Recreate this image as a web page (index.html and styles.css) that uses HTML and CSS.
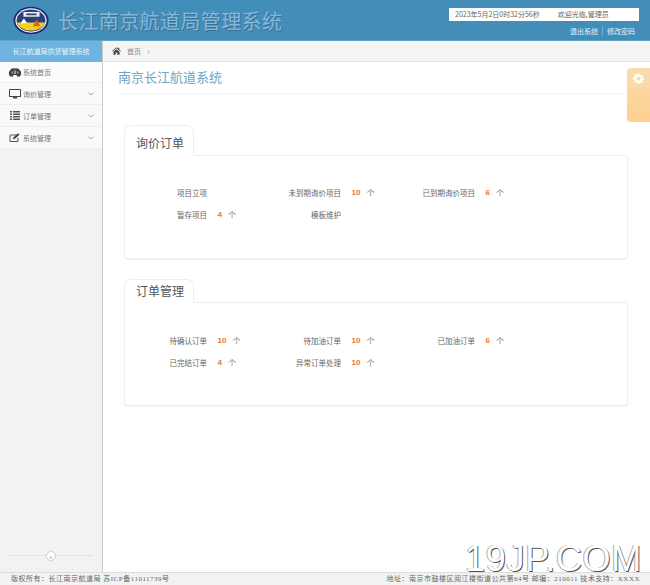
FILE: index.html
```html
<!DOCTYPE html>
<html lang="zh-CN">
<head>
  <meta charset="UTF-8" />
  <title>长江南京航道局管理系统</title>
  <link rel="stylesheet" href="styles.css">
</head>
<body>
  <!-- Header -->
  <header class="topbar">
    <svg class="logo" width="36" height="29" viewBox="0 0 38 30">
      <ellipse cx="19" cy="15" rx="18.5" ry="14.500" fill="#1d2a6b"/>
      <ellipse cx="19" cy="15" rx="16.5" ry="12.800" fill="#f4f4f4"/>
      <ellipse cx="19" cy="15" rx="15.2" ry="11.600" fill="#27407f"/>
      <path d="M4 17h30c-1 4-7 8.600-15 8.600S5 21 4 17z" fill="#f2d21f"/>
      <rect x="11" y="6" width="17" height="5" fill="#f1f1f1"/>
      <rect x="14" y="7.500" width="11" height="2" fill="#3a4a80"/>
      <path d="M8 18l3.500-5 3.500 5z" fill="#fff"/>
      <path d="M21 21l4-7 4 7z" fill="#d8641e"/>
    </svg>
    <div class="site-title">长江南京航道局管理系统</div>
    <div class="top-right">
      <div class="info-box">
        <span>2023年5月2日0时32分56秒</span>
        <span>欢迎光临,管理员</span>
      </div>
      <div class="top-links">
        <a>退出系统</a>
        <a>修改密码</a>
      </div>
    </div>
  </header>

  <div class="main">
    <!-- Sidebar -->
    <aside class="sidebar">
      <div class="side-title">长江航道局供货管理系统</div>
      <ul class="nav">
        <li class="nav-item">
          <svg class="nav-icon" width="11" height="9" viewBox="0 0 11 9">
            <path d="M.500 8.500A5 5 0 0 1 5.500.500a5 5 0 0 1 5 8H7.500L7 7H4l-.5 1.500z" fill="#444"/>
            <path d="M5.500 6V2.500" stroke="#eee" stroke-width="1"/>
            <path d="M2.500 5.500l.6-2M8.500 5.500l-.6-2" stroke="#eee" stroke-width=".8"/>
          </svg>
          <span>系统首页</span>
        </li>
        <li class="nav-item">
          <svg class="nav-icon" width="11" height="10" viewBox="0 0 12 10">
            <path d="M.500.500h11v7H.500z" fill="none" stroke="#444"/>
            <path d="M0 7h12v1H0zM4 8h4v1.500H4z" fill="#444"/>
          </svg>
          <span>询价管理</span>
          <svg class="arrow" width="6" height="4" viewBox="0 0 7 4"><path d="M.500.500l3 2.500 3-2.500" fill="none" stroke="#999"/></svg>
        </li>
        <li class="nav-item">
          <svg class="nav-icon" width="10" height="9" viewBox="0 0 10 9">
            <path d="M0 0h2v1.500H0zM3 0h7v1.500H3zM0 2.500h2V4H0zM3 2.500h7V4H3zM0 5h2v1.500H0zM3 5h7v1.500H3zM0 7.500h2V9H0zM3 7.500h7V9H3z" fill="#555"/>
          </svg>
          <span>订单管理</span>
          <svg class="arrow" width="6" height="4" viewBox="0 0 7 4"><path d="M.500.500l3 2.500 3-2.500" fill="none" stroke="#999"/></svg>
        </li>
        <li class="nav-item">
          <svg class="nav-icon" width="11" height="9" viewBox="0 0 11 9">
            <path d="M7.500 2H1a.5.500 0 0 0-.5.500v6h8V5" fill="none" stroke="#555"/>
            <path d="M3.500 6.200l.5-2L8.500.300l1.500 1.500L5.500 5.700z" fill="#444"/>
          </svg>
          <span>系统管理</span>
          <svg class="arrow" width="6" height="4" viewBox="0 0 7 4"><path d="M.500.500l3 2.500 3-2.500" fill="none" stroke="#999"/></svg>
        </li>
      </ul>
      <div class="collapse">
        <span class="collapse-btn">«</span>
      </div>
    </aside>

    <!-- Contenuto -->
    <main class="content">
      <div class="breadcrumb">
        <svg width="9" height="8" viewBox="0 0 11 9">
          <path d="M5.500 0L0 4.500l.6.700 4.900-4 4.900 4 .6-.7-2-1.600V.600H7.500v1.100zM1.800 5.300V9h2.700V6.200h2V9h2.700V5.300L5.500 2.300z" fill="#444"/>
        </svg>
        <a>首页</a>
        <span class="crumb-sep">›</span>
      </div>

      <div class="page-title">南京长江航道系统</div>

      <section class="panel panel-first">
        <div class="tab">询价订单</div>
        <div class="panel-body">
          <div class="stat"><span class="stat-label">项目立项</span></div>
          <div class="stat"><span class="stat-label">未到期询价项目</span><b>10</b><span class="unit">个</span></div>
          <div class="stat"><span class="stat-label">已到期询价项目</span><b>6</b><span class="unit">个</span></div>
          <div class="stat"><span class="stat-label">暂存项目</span><b>4</b><span class="unit">个</span></div>
          <div class="stat"><span class="stat-label">模板维护</span></div>
        </div>
      </section>

      <section class="panel">
        <div class="tab">订单管理</div>
        <div class="panel-body">
          <div class="stat"><span class="stat-label">待确认订单</span><b>10</b><span class="unit">个</span></div>
          <div class="stat"><span class="stat-label">待加油订单</span><b>10</b><span class="unit">个</span></div>
          <div class="stat"><span class="stat-label">已加油订单</span><b>6</b><span class="unit">个</span></div>
          <div class="stat"><span class="stat-label">已完结订单</span><b>4</b><span class="unit">个</span></div>
          <div class="stat"><span class="stat-label">异常订单处理</span><b>10</b><span class="unit">个</span></div>
        </div>
      </section>
    </main>
  </div>

  <footer class="footer">
    <span>版权所有：长江南京航道局 苏ICP备11011739号</span>
    <span>地址：南京市鼓楼区阅江楼街道公共第64号 邮编：210011 技术支持：XXXX</span>
  </footer>

  <!-- Linguetta impostazioni -->
  <div class="settings-tab">
    <svg width="11" height="11" viewBox="0 0 24 24">
      <path d="M10 1h4l.6 3.200 1.900.8L19.200 3 22 5.800l-2 2.700.8 1.900L24 11v4l-3.200.4-.8 1.900 2 2.700-2.800 2.800-2.700-2-1.900.8L14 24h-4l-.6-3.400-1.900-.8-2.700 2L2 19l2-2.700-.8-1.900L0 14v-4l3.200-.6.800-1.900-2-2.700L4.800 2l2.700 2 1.900-.8zM12 8a4.500 4.500 0 1 0 0 9 4.500 4.500 0 0 0 0-9z" fill="#fff" fill-rule="evenodd"/>
    </svg>
  </div>

  <div class="watermark">19JP.COM</div>
</body>
</html>
```

FILE: styles.css
```css
* {
  box-sizing: border-box;
  margin: 0;
  padding: 0;
}

html,
body {
  height: 585px;
  overflow: hidden;
}

body {
  position: relative;
  display: flex;
  flex-direction: column;
  background-color: #fff;
  color: #555;
  font-family: "Noto Sans CJK SC", "Liberation Sans", sans-serif;
  font-size: 7px;
}

/* Header */
.topbar {
  display: flex;
  align-items: center;
  height: 41px;
  padding: 0 11px 0 13px;
  background-color: #438eb9;
  border-bottom: 1px solid #5fa3cb;
}

.logo {
  flex-shrink: 0;
  margin-right: 9px;
}

.site-title {
  font-size: 20px;
  letter-spacing: .4px;
  color: #86b9d6;
  text-shadow: 1px 1px 0 #3a6f9a;
  white-space: nowrap;
}

.top-right {
  margin-left: auto;
  margin-top: 3px;
  width: 190px;
}

.info-box {
  display: flex;
  gap: 18px;
  align-items: center;
  height: 13px;
  padding-left: 6px;
  background-color: #fff;
  color: #666;
  font-size: 7px;
  white-space: nowrap;
}

.top-links {
  display: flex;
  justify-content: flex-end;
  margin-top: 5px;
  padding-right: 4px;
  color: #e6f1f7;
  font-size: 7px;
  line-height: 10px;
}

.top-links a + a {
  margin-left: 4px;
  padding-left: 4px;
  border-left: 1px solid #6fb0d4;
}

.main {
  display: flex;
  flex: 1;
  min-height: 0;
}

/* Sidebar */
.sidebar {
  display: flex;
  flex-direction: column;
  width: 103px;
  flex-shrink: 0;
  background-color: #f2f2f2;
  border-right: 1px solid #ccc;
}

.side-title {
  height: 21px;
  line-height: 21px;
  text-align: center;
  background-color: #6fb3e0;
  color: #eaf4fa;
  font-size: 7px;
  white-space: nowrap;
}

.nav {
  list-style: none;
}

.nav-item {
  display: flex;
  align-items: center;
  height: 22px;
  padding: 0 7px 0 7px;
  background-color: #f9f9f9;
  border-bottom: 1px solid #eee;
  color: #777;
}

.nav-item:first-child {
  height: 21px;
  background-color: #fbfbfb;
}

.nav-icon {
  width: 16px;
  flex-shrink: 0;
}

.arrow {
  margin-left: auto;
  margin-right: 1px;
}

.collapse {
  position: relative;
  display: flex;
  justify-content: center;
  margin: auto 9px 11px;
  border-top: 1px solid #e2e2e2;
}

.collapse-btn {
  width: 10px;
  height: 10px;
  margin-top: -5px;
  line-height: 8px;
  text-align: center;
  background-color: #fff;
  border: 1px solid #ccc;
  border-radius: 50%;
  color: #999;
  font-size: 7px;
}

/* Contenuto */
.content {
  flex: 1;
  min-width: 0;
  padding-right: 22px;
}

.breadcrumb {
  display: flex;
  align-items: center;
  gap: 6px;
  height: 21px;
  margin-right: -22px;
  padding-left: 9px;
  background-color: #f5f5f5;
  border-bottom: 1px solid #e5e5e5;
  color: #8a8a8a;
}

.crumb-sep {
  color: #aaa;
  font-size: 9px;
}

.page-title {
  height: 32px;
  margin-left: 15px;
  padding-top: 5px;
  border-bottom: 1px solid #f4f4f4;
  color: #6ba6c4;
  font-size: 13px;
  line-height: 20px;
}

.panel {
  margin: 20px 0 0 21px;
}

.panel-first {
  margin-top: 31px;
}

.tab {
  position: relative;
  width: 70px;
  height: 24px;
  margin-bottom: -1px;
  padding-left: 11px;
  background-color: #fff;
  border: 1px solid #eee;
  border-bottom: none;
  border-radius: 7px 7px 0 0;
  color: #555;
  font-size: 12px;
  line-height: 22px;
}

.panel-first .tab {
  height: 31px;
  padding-top: 6px;
}

.panel-body {
  display: grid;
  grid-template-columns: repeat(3, 134px);
  grid-auto-rows: 22px;
  height: 104px;
  padding-top: 26px;
  background-color: #fff;
  border: 1px solid #eee;
  border-radius: 0 4px 4px 4px;
  box-shadow: 0 1px 1px #f2f2f2;
}

.panel-first .panel-body {
  padding-top: 25px;
}

.stat {
  display: flex;
  align-items: center;
  color: #666;
  font-size: 7.500px;
}

.stat-label {
  width: 82px;
  margin-right: 10.500px;
  text-align: right;
  white-space: nowrap;
}

.stat b {
  margin-right: 6px;
  color: #e8782f;
  font-family: "Liberation Sans", sans-serif;
  font-size: 8px;
}

.unit {
  color: #777;
  font-size: 8px;
}

/* Footer */
.footer {
  display: flex;
  justify-content: space-between;
  height: 13px;
  padding: 0 10px 0 11px;
  background-color: #f2f2f2;
  border-top: 1px solid #ddd;
  color: #666;
  font-family: "Liberation Serif", "Noto Sans CJK SC", serif;
  font-size: 7px;
  letter-spacing: .5px;
  line-height: 12px;
  white-space: nowrap;
}

/* Linguetta impostazioni */
.settings-tab {
  position: absolute;
  top: 68px;
  right: 0;
  display: flex;
  justify-content: center;
  width: 23px;
  height: 54px;
  padding-top: 5px;
  background: linear-gradient(#fbdcae, #fdcf8f);
  border-radius: 4px 0 0 4px;
}

.settings-tab svg {
  margin-right: 1px;
}

.watermark {
  position: absolute;
  top: 537px;
  left: 465px;
  color: #fff;
  font-family: "Liberation Sans", sans-serif;
  font-size: 36px;
  letter-spacing: .7px;
  line-height: 44px;
  text-shadow: 1px 1px 0 #555, -1px 0 0 #aaa;
  white-space: nowrap;
}
```
